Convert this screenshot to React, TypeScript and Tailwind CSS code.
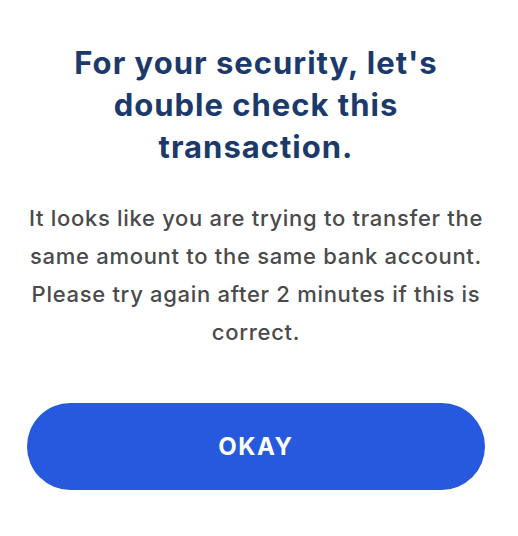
import React from "react";

export default function App() {
  return (
    <div
      className="w-[518px] h-[536px] bg-white flex flex-col items-center pr-[6px]"
      style={{ fontFamily: "Inter, 'Noto Sans', sans-serif" }}
    >
      <h1 className="mt-[42px] text-center text-[31px] leading-[42px] font-bold text-[#1b3a6b] tracking-[1px]">
        For your security, let's
        <br />
        double check this
        <br />
        transaction.
      </h1>
      <p className="mt-[31px] text-center text-[22px] leading-[38px] font-medium text-[#4a4a4c] tracking-[0.7px] whitespace-nowrap">
        It looks like you are trying to transfer the
        <br />
        same amount to the same bank account.
        <br />
        Please try again after 2 minutes if this is
        <br />
        correct.
      </p>
      <button className="mt-[52px] w-[458px] h-[87px] rounded-full bg-[#2659de] text-white text-[24px] font-bold tracking-[1.5px] flex items-center justify-center">
        OKAY
      </button>
    </div>
  );
}
